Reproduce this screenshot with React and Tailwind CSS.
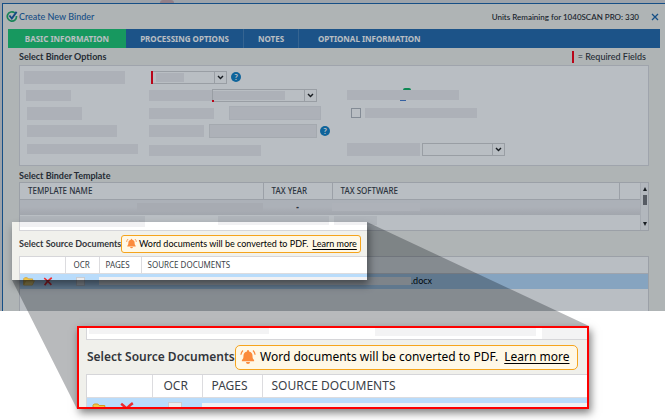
import { useState } from 'react'
import clsx from 'clsx'

const TABS = ['BASIC INFORMATION', 'PROCESSING OPTIONS', 'NOTES', 'OPTIONAL INFORMATION']

const TAB_WIDTHS = ['w-[118px]', 'w-[118px]', 'w-[55px]', 'px-[19px]']

function LogoIcon() {
  return (
    <svg viewBox="0 0 12 12" className="w-3 h-3 shrink-0" fill="none">
      <path d="M8.8 1.9A4.6 4.6 0 1 0 10.5 5" stroke="#25b06c" strokeWidth="1.7" />
      <path d="M3.4 4.500l2.400 3L10.600.9" stroke="#1b5fa8" strokeWidth="1.9" />
    </svg>
  )
}

function CloseIcon() {
  return (
    <svg viewBox="0 0 8 8" className="w-2 h-2" fill="none" stroke="#1f67ab" strokeWidth="1.3">
      <path d="M1 1l6 6M7 1L1 7" />
    </svg>
  )
}

function BellIcon({ className }) {
  return (
    <svg viewBox="0 0 16 16" className={className} fill="#fb8b3c">
      <path d="M8 1a1 1 0 0 1 1 1v.4c2.300.5 3.500 2 3.500 4.100 0 2.600.5 3.600 1.600 4.600v1.200H1.900v-1.200C3 10.100 3.500 9.100 3.500 6.500c0-2.100 1.200-3.600 3.500-4.100V2a1 1 0 0 1 1-1z" />
      <path d="M6 13h4a2 2 0 0 1-4 0z" />
      <path
        d="M3 1.500C1.800 2.600 1.100 4 .9 5.700M13 1.500c1.200 1.100 1.900 2.500 2.100 4.200"
        fill="none"
        stroke="#fb8b3c"
        strokeWidth="1.200"
      />
    </svg>
  )
}

function FolderIcon({ className }) {
  return (
    <svg viewBox="0 0 16 12" className={className}>
      <path d="M1 10.500V2.200L2.200 1h3.600l1.300 1.500h5.700v2.300" fill="#f3c74b" stroke="#d39b22" />
      <path d="M1 10.800L3.600 5h11.600l-2.800 5.800z" fill="#fbdc76" stroke="#e0b040" />
    </svg>
  )
}

function DeleteIcon({ className }) {
  return (
    <svg viewBox="0 0 12 12" className={className} fill="none" stroke="#ee2a2e" strokeWidth="2.200">
      <path d="M1 1.500c3 2.200 6 5.500 9.500 9M11 1C7.500 3.500 4 7 1.500 11" />
    </svg>
  )
}

function Block({ className }) {
  return <span className={clsx('block shrink-0', className)} />
}

function SelectBox({ label, required, className, fill }) {
  return (
    <span className={clsx('relative flex h-[13px] border border-[#d3d3d5] bg-white', className)}>
      {required && <span className="w-[2px] -my-px -ml-px bg-[#ff0016]" />}
      {fill && <Block className={clsx('my-px bg-[#efeef0]', fill)} />}
      <select aria-label={label} className="appearance-none flex-1 min-w-0 outline-none" />
      <span className="w-3 flex items-center justify-center border-l border-[#d3d3d5] pointer-events-none">
        <svg viewBox="0 0 8 6" className="w-[7px] h-[5px]" fill="none" stroke="#222" strokeWidth="1.700">
          <path d="M1 1.200l3 3 3-3" />
        </svg>
      </span>
    </span>
  )
}

function HelpButton() {
  return (
    <button
      type="button"
      aria-label="Help"
      className="w-[10px] h-[10px] shrink-0 rounded-full bg-[#1583c8] text-white text-[8px] leading-[10px] font-bold text-center"
    >
      ?
    </button>
  )
}

function Row({ label, field, extra }) {
  return (
    <div className="flex h-[18px] items-center">
      <div className="w-[125px] shrink-0">{label}</div>
      <div className="w-[198px] shrink-0 flex items-center">{field}</div>
      <div className="flex items-center">{extra}</div>
    </div>
  )
}

function BinderOptions() {
  return (
    <div className="h-[101px] border border-[#dcdcdf] bg-white pl-1 pt-[2px]">
      <Row
        label={<Block className="w-[101px] h-[13px] bg-[#efeef0]" />}
        field={
          <>
            <SelectBox label="Service" required fill="w-7 ml-[3px]" className="w-[76px] ml-[2px]" />
            <span className="w-1" />
            <HelpButton />
          </>
        }
      />
      <Row
        label={<Block className="w-[45px] h-[11px] ml-[2px] bg-[#efeef0]" />}
        field={
          <>
            <Block className="w-[63px] h-[11px] bg-[#efeef0]" />
            <span className="relative">
              <SelectBox label="Preparer" fill="w-[72px]" className="w-[105px]" />
              <span className="absolute left-0 bottom-0 w-[2px] h-[2px] bg-[#ff0016]" />
            </span>
          </>
        }
        extra={
          <span className="relative block">
            <Block className="w-[112px] h-[10px] bg-[#efeef0]" />
            <span className="absolute left-[56px] -top-[2px] w-2 h-[2px] rounded-t-full bg-[#12b565]" />
            <span className="absolute left-[53px] top-[10px] w-[6px] h-px bg-[#4a7fd0]" />
          </span>
        }
      />
      <Row
        label={<Block className="w-[55px] h-[13px] ml-[3px] bg-[#efeef0]" />}
        field={
          <>
            <Block className="w-[65px] h-[11px] bg-[#efeef0]" />
            <input
              aria-label="Client ID"
              className="w-[92px] h-[14px] ml-[15px] bg-[#efeef0] border border-[#e8e8ea]"
            />
          </>
        }
        extra={
          <label className="flex items-center gap-1 ml-1">
            <input
              type="checkbox"
              aria-label="Notify"
              className="appearance-none w-[10px] h-[10px] border border-[#b5b9c0] bg-white"
            />
            <Block className="w-[112px] h-[10px] bg-[#efeef0]" />
          </label>
        }
      />
      <Row
        label={<Block className="w-[90px] h-[12px] ml-[3px] bg-[#efeef0]" />}
        field={
          <>
            <Block className="w-[55px] h-[12px] bg-[#efeef0]" />
            <input
              aria-label="Email"
              className="w-[108px] h-[14px] ml-[5px] mr-[3px] bg-[#efeef0] border border-[#e2e2e4]"
            />
            <HelpButton />
          </>
        }
      />
      <Row
        label={<Block className="w-[111px] h-[10px] ml-[3px] bg-[#efeef0]" />}
        field={<Block className="w-[112px] h-[11px] mt-[2px] bg-[#efeef0]" />}
        extra={
          <>
            <Block className="w-[73px] h-[13px] bg-[#efeef0]" />
            <SelectBox label="Office" className="w-[83px] ml-[2px]" />
          </>
        }
      />
    </div>
  )
}

function TemplateTable() {
  const cell = 'border-r border-[#d6d6d9] text-left font-medium pl-2 leading-[15px]'
  return (
    <div className="flex h-[49px] border border-[#d6d6d9] bg-white">
      <table className="flex-1 table-fixed w-full border-collapse font-['Noto_Sans',sans-serif] text-[8px] text-[#3b3f48]">
        <colgroup>
          <col className="w-[243px]" />
          <col className="w-[69px]" />
          <col />
          <col className="w-[21px]" />
        </colgroup>
        <thead>
          <tr className="h-[16px] border-b border-[#d6d6d9]">
            <th className={cell}>TEMPLATE NAME</th>
            <th className={cell}>TAX YEAR</th>
            <th className={cell}>TAX SOFTWARE</th>
            <th />
          </tr>
        </thead>
        <tbody>
          <tr className="h-[16px] bg-linear-to-b from-[#eeedf0] from-50% to-[#dfdee1]">
            <td className="p-0">
              <Block className="w-[126px] h-2 ml-auto bg-[#e6e5e8]" />
            </td>
            <td className="p-0 text-center leading-[14px] font-black">-</td>
            <td className="p-0">
              <Block className="w-[88px] h-2 bg-[#f0eff1]" />
            </td>
            <td />
          </tr>
          <tr className="h-[15px]">
            <td className="p-0 align-top">
              <div className="flex justify-between pt-px">
                <Block className="w-[125px] h-[11px] bg-[#f1f1f3]" />
                <Block className="w-[45px] h-[9px] bg-[#f1f1f3]" />
              </div>
            </td>
            <td className="p-0 align-top pt-px">
              <Block className="w-[66px] h-[9px] bg-[#f1f1f3]" />
            </td>
            <td className="p-0 align-top pt-px">
              <Block className="w-[43px] h-[9px] ml-[2px] bg-[#f1f1f3]" />
            </td>
            <td />
          </tr>
        </tbody>
      </table>
      <div className="w-2 flex flex-col items-center border-l border-[#e4e4e6] bg-[#f6f6f7] py-1">
        <svg viewBox="0 0 4 4" className="w-1 h-1" fill="#222">
          <path d="M2 0l2 4H0z" />
        </svg>
        <span className="w-1 h-[10px] mt-1 bg-[#77777b]" />
        <svg viewBox="0 0 4 4" className="w-1 h-1 mt-auto" fill="#222">
          <path d="M2 4l2-4H0z" />
        </svg>
      </div>
    </div>
  )
}

function SourceHeading({ large }) {
  return (
    <div
      className={clsx(
        'flex items-center',
        large ? "h-[34px] font-['Noto_Sans',sans-serif] text-[12px]" : 'h-[25px] text-[9px]'
      )}
    >
      <h2
        className={clsx(
          'shrink-0 whitespace-nowrap text-[#33363b]',
          large ? 'w-[149px] pl-px font-semibold' : 'w-[102px] font-bold'
        )}
      >
        Select Source Documents
      </h2>
      <p
        className={clsx(
          'flex items-center whitespace-nowrap border border-[#f5a41c] bg-[#fff8e6] text-black',
          large ? 'h-[25px] w-[343px] rounded-[5px] pl-1' : 'h-[18px] w-[240px] rounded-[3px] pl-1'
        )}
      >
        <BellIcon className={large ? 'w-4 h-4 mr-1' : 'w-[11px] h-[11px] mr-[2px]'} />
        Word documents will be converted to PDF.
        <a href="#learn-more" className={clsx('underline underline-offset-2', large ? 'ml-[6px]' : 'ml-1')}>
          Learn more
        </a>
      </p>
    </div>
  )
}

function SourceTable({ large }) {
  const cell = clsx(
    'border-r border-[#dcdcdf] text-left font-normal',
    large ? 'leading-[21px]' : 'leading-[15px]'
  )
  return (
    <table
      className={clsx(
        "w-full table-fixed border-collapse font-['Noto_Sans',sans-serif] text-[#3b3f48]",
        large ? 'text-[12px]' : 'text-[8px]'
      )}
    >
      <colgroup>
        <col className={large ? 'w-[65px]' : 'w-[45px]'} />
        <col className={large ? 'w-[50px]' : 'w-[34px]'} />
        <col className={large ? 'w-[60px]' : 'w-[42px]'} />
        <col />
      </colgroup>
      <thead>
        <tr className={clsx('border-b border-[#dcdcdf]', large ? 'h-[22px]' : 'h-[16px]')}>
          <th className={cell} />
          <th className={clsx(cell, large ? 'pl-[11px]' : 'pl-2')}>OCR</th>
          <th className={clsx(cell, large ? 'pl-[9px]' : 'pl-[6px]')}>PAGES</th>
          <th className={clsx('text-left font-normal', large ? 'pl-[9px]' : 'pl-[6px]')}>SOURCE DOCUMENTS</th>
        </tr>
      </thead>
      <tbody>
        <tr className={clsx('bg-[#b9dcfb]', large ? 'h-[24px]' : 'h-[16px]')}>
          <td className="p-0">
            <div className={clsx('flex items-center', large ? 'pl-[5px] gap-3' : 'pl-[3px] gap-2')}>
              <button type="button" aria-label="Open">
                <FolderIcon className={large ? 'w-4 h-[14px]' : 'w-[12px] h-[9px]'} />
              </button>
              <button type="button" aria-label="Remove">
                <DeleteIcon className={large ? 'w-[14px] h-[14px]' : 'w-[10px] h-[9px]'} />
              </button>
            </div>
          </td>
          <td className="p-0">
            <input
              type="checkbox"
              aria-label="OCR"
              className={clsx(
                'block appearance-none border border-[#c9cdd3] bg-[#ececee]',
                large ? 'w-[14px] h-[14px] ml-4' : 'w-[9px] h-[9px] ml-[11px]'
              )}
            />
          </td>
          <td colSpan={2} className="p-0">
            <div className="flex items-center">
              <span className={clsx('bg-[#f1f1f3]', large ? 'flex-1 h-3' : 'w-[312px] h-2')} />
              {!large && (
                <span className="font-['Lato',sans-serif] text-[9px] leading-[14px] text-black">.docx</span>
              )}
            </div>
          </td>
        </tr>
      </tbody>
    </table>
  )
}

function ZoomedCallout() {
  return (
    <section
      aria-label="Source documents, enlarged"
      className="relative w-[512px] max-w-full max-h-[83px] mt-[15px] ml-[77px] overflow-hidden border-2 border-[#fd0000] bg-[#f0f0eb] pl-[7px] shadow-[2px_4px_8px_rgba(0,0,0,0.5)]"
    >
      <div className="flex items-start h-[12px] border-l border-b border-[#d6d6d9] bg-white pl-[2px]">
        <Block className="w-[180px] h-[6px] bg-[#f3f3f4]" />
        <Block className="w-[161px] h-2 ml-[106px] bg-[#f3f3f4]" />
        <Block className="flex-1 h-[11px] ml-[6px] bg-[#f3f3f4]" />
      </div>
      <SourceHeading large />
      <div className="border-l border-t border-[#d6d6d9] bg-white">
        <SourceTable large />
      </div>
    </section>
  )
}

export default function App() {
  const [active, setActive] = useState(0)

  return (
    <main className="relative overflow-hidden bg-white pb-[11px] font-['Lato',sans-serif] text-[9px] leading-[12px]">
      <div className="relative overflow-hidden bg-[#d9dadd] pl-[2px]">
        <div className="h-[3px]">
          <div className="w-[14px] h-full ml-[158px] rounded-t-full bg-[#c9a9ae]" />
        </div>
        <section className="border-l border-t border-[#1f67ab] bg-[#f1f1ec]">
          <header className="flex items-center h-[25px] pl-[3px] pr-[6px]">
            <LogoIcon />
            <h1 className="ml-[1px] text-[#1f67ab] font-medium">Create New Binder</h1>
            <span className="ml-auto mr-3 text-[8px] text-[#23262b] font-medium">
              Units Remaining for 1040SCAN PRO: 330
            </span>
            <button type="button" aria-label="Close">
              <CloseIcon />
            </button>
          </header>

          <nav
            role="tablist"
            className="flex h-[19px] ml-[5px] mr-[5px] bg-[#276cae] font-['Noto_Sans',sans-serif] text-[8px]"
          >
            {TABS.map((tab, i) => (
              <button
                key={tab}
                type="button"
                role="tab"
                aria-selected={i === active}
                onClick={() => setActive(i)}
                className={clsx(
                  'font-bold whitespace-nowrap text-white',
                  TAB_WIDTHS[i],
                  i === active ? 'bg-[#20cb75]' : i < 3 && 'border-r border-[#4a84bb]'
                )}
              >
                {tab}
              </button>
            ))}
          </nav>

          <div className="ml-4 mr-4">
            <div className="flex items-center justify-between h-[17px]">
              <h2 className="font-bold text-[#33363b]">Select Binder Options</h2>
              <p className="flex items-center gap-1 pr-[3px] text-[#33363b] font-medium">
                <span className="w-[2px] h-3 bg-[#ff0016]" />= Required Fields
              </p>
            </div>
            <BinderOptions />

            <h2 className="h-4 pt-1 leading-[12px] font-bold text-[#33363b]">Select Binder Template</h2>
            <TemplateTable />

            <SourceHeading />
            <div className="border border-b-0 border-[#d6d6d9] bg-white pb-[22px]">
              <SourceTable />
            </div>
          </div>
        </section>

        {/* spotlight, everything outside of it is dimmed */}
        <div className="absolute left-3 top-[222px] w-[355px] h-[58px] pointer-events-none shadow-[2px_5px_8px_rgba(0,0,0,0.45),0_0_0_2000px_rgba(0,18,36,0.275)]" />
      </div>

      {/* beam from the spotlight to the enlarged view */}
      <svg
        className="absolute left-0 top-0 w-[589px] h-[409px] pointer-events-none"
        viewBox="0 0 589 409"
        fill="#00060f"
        fillOpacity="0.28"
      >
        <path d="M367 222L589 326V409H77L12 280H367z" />
      </svg>

      <ZoomedCallout />
    </main>
  )
}
